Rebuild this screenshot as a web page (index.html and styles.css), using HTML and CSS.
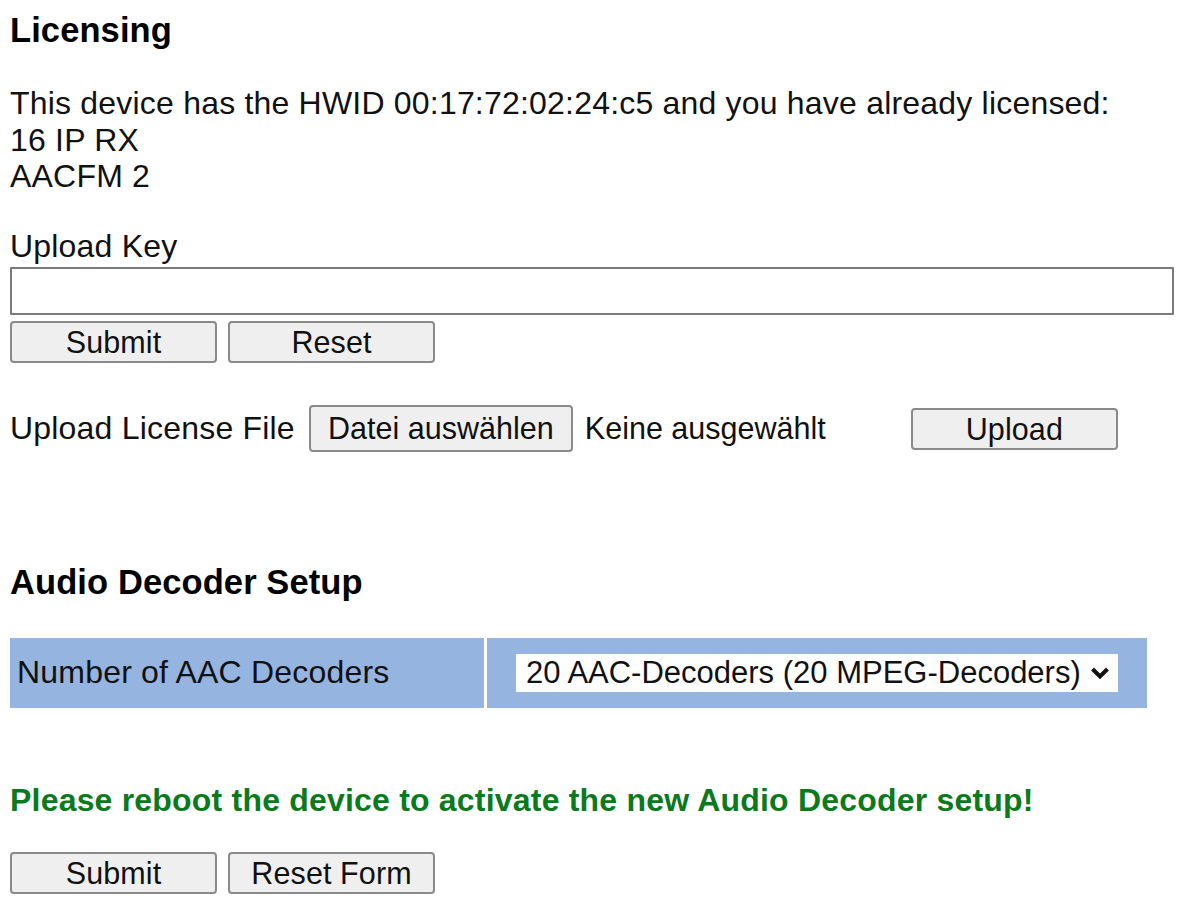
FILE: index.html
```html
<!DOCTYPE html>
<html>
<head>
<meta charset="utf-8">
<link rel="stylesheet" href="styles.css">
</head>
<body>
<div class="page">
  <h2 class="heading heading-lic">Licensing</h2>
  <p class="info">This device has the HWID 00:17:72:02:24:c5 and you have already licensed:<br>16 IP RX<br>AACFM 2</p>
  <form class="key-form">
    <label class="key-label">Upload Key</label>
    <input class="key-input" type="text">
    <div class="btn-row">
      <button type="button" class="btn">Submit</button>
      <button type="button" class="btn">Reset</button>
    </div>
  </form>
  <div class="file-row">
    <span class="file-label">Upload License File</span>
    <span class="file-btn">Datei auswählen</span>
    <span class="file-none">Keine ausgewählt</span>
    <button type="button" class="btn btn-upload">Upload</button>
  </div>
  <h2 class="heading heading-audio">Audio Decoder Setup</h2>
  <div class="setup-table">
    <div class="cell cell-label">Number of AAC Decoders</div>
    <div class="cell cell-value">
      <div class="select-wrap">
        <span class="select-text">20 AAC-Decoders (20 MPEG-Decoders)</span>
        <svg class="chevron" width="20" height="14" viewBox="0 0 20 14"><path d="M2.5 3 L10 10.5 L17.5 3" fill="none" stroke="#111" stroke-width="4"/></svg>
      </div>
    </div>
  </div>
  <p class="notice">Please reboot the device to activate the new Audio Decoder setup!</p>
  <div class="btn-row btn-row-bottom">
    <button type="button" class="btn">Submit</button>
    <button type="button" class="btn">Reset Form</button>
  </div>
</div>
</body>
</html>
```

FILE: styles.css
```css
html, body {
  margin: 0;
  padding: 0;
  background: #ffffff;
}
body {
  font-family: "Liberation Sans", Arial, sans-serif;
  font-size: 32px;
  letter-spacing: 0.2px;
  color: #111111;
}
.page {
  padding: 0 10px;
}
.heading {
  font-size: 34.5px;
  font-weight: bold;
  line-height: 40px;
  margin: 0;
  color: #000;
  letter-spacing: 0.1px;
}
.heading-lic {
  padding-top: 10px;
}
.info {
  margin: 35px 0 0 0;
  line-height: 36.5px;
}
.key-form {
  margin: 33px 0 0 0;
  display: flex;
  flex-direction: column;
}
.key-label {
  line-height: 36px;
}
.key-input {
  margin-top: 3px;
  box-sizing: border-box;
  width: 1164px;
  height: 48px;
  border: 2px solid #7a7a7a;
  border-radius: 1px;
  padding: 0 6px;
  font: inherit;
  background: #fff;
}
.btn-row {
  display: flex;
  gap: 11px;
  margin-top: 6px;
}
.btn {
  box-sizing: border-box;
  width: 207px;
  height: 42px;
  border: 2px solid #8a8a8a;
  border-radius: 4px;
  background: #efefef;
  font-family: inherit;
  font-size: 30.5px;
  letter-spacing: 0.1px;
  color: #111;
  padding: 0;
  line-height: 36px;
}
.file-row {
  margin-top: 42px;
  display: flex;
  align-items: center;
  height: 47px;
}
.file-label {
  margin-right: 14px;
}
.file-btn {
  box-sizing: border-box;
  height: 47px;
  width: 264px;
  border: 2px solid #8a8a8a;
  border-radius: 4px;
  background: #efefef;
  display: flex;
  align-items: center;
  justify-content: center;
  font-size: 30.5px;
  letter-spacing: 0;
}
.file-none {
  margin-left: 12px;
  width: 326px;
  font-size: 30.5px;
  letter-spacing: 0;
}
.btn-upload {
  margin-top: 2px;
}
.heading-audio {
  margin-top: 110px;
}
.setup-table {
  margin-top: 36px;
  display: flex;
  gap: 3px;
  width: 1137px;
  height: 70px;
}
.cell {
  background: #95b4e0;
  display: flex;
  align-items: center;
}
.cell-label {
  width: 474px;
  padding-left: 7px;
  box-sizing: border-box;
}
.cell-value {
  flex: 1;
  padding-left: 29px;
}
.select-wrap {
  position: relative;
  width: 602px;
  height: 38px;
  background: #fff;
  display: flex;
  align-items: center;
  box-sizing: border-box;
  padding-left: 10px;
}
.select-text {
  white-space: nowrap;
  font-size: 31px;
  letter-spacing: 0;
}
.chevron {
  position: absolute;
  right: 8px;
  top: 12px;
}
.notice {
  margin: 74px 0 0 0;
  color: #0a7a1c;
  font-weight: bold;
  font-size: 32px;
  line-height: 36px;
}
.btn-row-bottom {
  margin-top: 34px;
}
```
